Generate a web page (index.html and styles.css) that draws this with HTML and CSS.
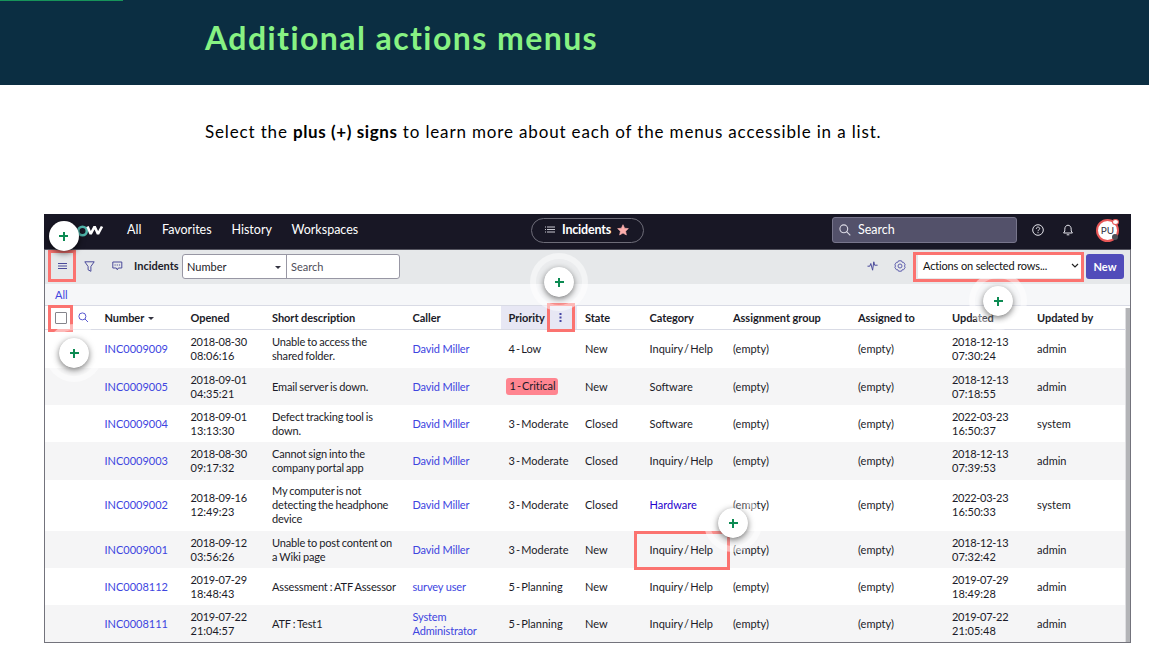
FILE: index.html
```html
<!DOCTYPE html>
<html lang="en">
<head>
<meta charset="utf-8">
<title>Additional actions menus</title>
<link rel="stylesheet" href="styles.css">
</head>
<body>
<header class="banner"><div class="progress"></div><h1>Additional actions menus</h1></header>
<p class="intro">Select the <b>plus (+) signs</b> to learn more about each of the menus accessible in a list.</p>
<main class="frame">
  <nav class="nav">
    <svg class="logo" width="50" height="18" viewBox="0 0 50 18"><circle cx="26.500" cy="10" r="4.300" fill="none" stroke="#4fb5aa" stroke-width="2.600"/><path d="M31.500 5.500l3.200 7.500 3.900-7.500 3.400 7.500 4-7.500" fill="none" stroke="#fff" stroke-width="2.600" stroke-linejoin="bevel"/></svg>
    <div class="links"><span class="l1">All</span><span class="l2">Favorites</span><span class="l3">History</span><span>Workspaces</span></div>
    <div class="pill"><svg width="10" height="8" viewBox="0 0 10 8" stroke="#c9c9d2"><path d="M2 1H10M2 3.500H10M2 6H10M0 1h1M0 3.500h1M0 6h1"/></svg><b>Incidents</b><svg width="12" height="12" viewBox="0 0 12 12"><path fill="#fcaeac" stroke="#fcaeac" stroke-width=".6" stroke-linejoin="round" d="M6 .7l1.600 3.500 3.800.4-2.800 2.600.8 3.800L6 9.100 2.600 11l.8-3.800L.6 4.600l3.800-.4z"/></svg></div>
    <div class="global"><svg width="12" height="12" viewBox="0 0 12 12" fill="none" stroke="#dddce6" stroke-width="1.100"><circle cx="4.800" cy="4.800" r="3.900"/><path d="M7.600 7.600l3.700 3.700"/></svg>Search</div>
    <svg class="help" width="12" height="12" viewBox="0 0 12 12" fill="none" stroke="#e5e5ec"><circle cx="6" cy="6" r="5.300"/><path d="M4.300 4.800c0-2.300 3.400-2.200 3.400-.2C7.700 5.900 6 5.700 6 7.200M6 8.200v1"/></svg>
    <svg class="bell" width="10" height="12" viewBox="0 0 10 12" fill="none" stroke="#e5e5ec"><path d="M1.800 7V5.200c0-5.300 6.400-5.300 6.400 0V7l1.200 2H.6zM3.700 10.800h2.600"/></svg>
    <div class="avatar"><span>PU</span><i class="ring"></i><i class="presence"></i></div>
  </nav>
  <section class="toolbar">
    <svg class="t1" width="10" height="8" viewBox="0 0 10 8" stroke="#4b4b9b"><path d="M1 1.500h9M1 4h9M1 6.500h9"/></svg>
    <svg class="t2" width="11" height="11" viewBox="0 0 11 11" fill="none" stroke="#4b4b9b" stroke-linejoin="round"><path d="M.8.800h9.400L6.900 5.500v4.800L4.100 8.800V5.500z"/></svg>
    <svg class="t3" width="11" height="10" viewBox="0 0 11 10" fill="none" stroke="#4b4b9b"><path d="M.8 1h9v6H6.300L5.300 8.800 4.300 7H.8z"/><path d="M2.500 4h1.200M4.700 4h1.200M6.900 4h1.200"/></svg>
    <b class="title">Incidents</b>
    <div class="combo"><div class="field">Number<i class="caret"></i></div><div class="query">Search</div></div>
    <svg class="pulse" width="11" height="10" viewBox="0 0 11 10" fill="none" stroke="#4b4b9b"><path d="M.5 5.200h2.300l1-2.700 1.800 6.700L6.800.800l.8 3.400h3"/></svg>
    <svg class="gear" width="12" height="12" viewBox="0 0 12 12" fill="none" stroke="#6060ae"><path d="M4.500.800h3l.6 1.400 1.600.2 1.500 2.500L10.400 6l.8 1.200-1.500 2.500-1.600.1-.6 1.400h-3l-.6-1.400-1.600-.1L.8 7.200 1.600 6 .8 4.900l1.500-2.500 1.600-.2z" stroke-linejoin="round"/><circle cx="6" cy="6" r="2"/></svg>
    <div class="actions">Actions on selected rows...<svg width="8" height="6" viewBox="0 0 8 6" fill="none" stroke="#222" stroke-width="1.200"><path d="M1 1l3 3 3-3"/></svg></div>
    <div class="new">New</div>
  </section>
  <div class="crumb">All</div>
  <section class="list">
    <div class="row head"><div class="tools"><i class="check"></i><svg width="11" height="11" viewBox="0 0 11 11" fill="none" stroke="#5a5ad0"><circle cx="4.400" cy="4.400" r="3.500"/><path d="M7 7l3 3"/></svg></div><div>Number<i class="caret"></i></div><div>Opened</div><div>Short description</div><div>Caller</div><div class="priority">Priority<svg width="3" height="9" viewBox="0 0 3 9" fill="#4747a5"><path d="M.5 0h2v2h-2zM.5 3.500h2v2h-2zM.5 7h2v2h-2z"/></svg></div><div>State</div><div>Category</div><div>Assignment group</div><div>Assigned to</div><div>Updated</div><div>Updated by</div></div>
    <div class="row first"><div></div><div class="link">INC0009009</div><div class="date">2018-08-30<br>08:06:16</div><div class="desc">Unable to access the<br>shared folder.</div><div class="link caller">David Miller</div><div class="tight">4 - Low</div><div>New</div><div class="tight">Inquiry / Help</div><div>(empty)</div><div>(empty)</div><div class="date">2018-12-13<br>07:30:24</div><div>admin</div></div>
    <div class="row alt"><div></div><div class="link">INC0009005</div><div class="date">2018-09-01<br>04:35:21</div><div class="desc">Email server is down.</div><div class="link caller">David Miller</div><div class="tight"><span class="critical">1 - Critical</span></div><div>New</div><div>Software</div><div>(empty)</div><div>(empty)</div><div class="date">2018-12-13<br>07:18:55</div><div>admin</div></div>
    <div class="row"><div></div><div class="link">INC0009004</div><div class="date">2018-09-01<br>13:13:30</div><div class="desc">Defect tracking tool is<br>down.</div><div class="link caller">David Miller</div><div class="tight">3 - Moderate</div><div>Closed</div><div>Software</div><div>(empty)</div><div>(empty)</div><div class="date">2022-03-23<br>16:50:37</div><div>system</div></div>
    <div class="row alt first"><div></div><div class="link">INC0009003</div><div class="date">2018-08-30<br>09:17:32</div><div class="desc">Cannot sign into the<br>company portal app</div><div class="link caller">David Miller</div><div class="tight">3 - Moderate</div><div>Closed</div><div class="tight">Inquiry / Help</div><div>(empty)</div><div>(empty)</div><div class="date">2018-12-13<br>07:39:53</div><div>admin</div></div>
    <div class="row tall"><div></div><div class="link">INC0009002</div><div class="date">2018-09-16<br>12:49:23</div><div class="desc">My computer is not<br>detecting the headphone<br>device</div><div class="link caller">David Miller</div><div class="tight">3 - Moderate</div><div>Closed</div><div class="hardware">Hardware</div><div>(empty)</div><div>(empty)</div><div class="date">2022-03-23<br>16:50:33</div><div>system</div></div>
    <div class="row alt"><div></div><div class="link">INC0009001</div><div class="date">2018-09-12<br>03:56:26</div><div class="desc">Unable to post content on<br>a Wiki page</div><div class="link caller">David Miller</div><div class="tight">3 - Moderate</div><div>New</div><div class="tight">Inquiry / Help</div><div>(empty)</div><div>(empty)</div><div class="date">2018-12-13<br>07:32:42</div><div>admin</div></div>
    <div class="row"><div></div><div class="link">INC0008112</div><div class="date">2019-07-29<br>18:48:43</div><div class="desc">Assessment : ATF Assessor</div><div class="link caller">survey user</div><div class="tight">5 - Planning</div><div>New</div><div class="tight">Inquiry / Help</div><div>(empty)</div><div>(empty)</div><div class="date">2019-07-29<br>18:49:28</div><div>admin</div></div>
    <div class="row alt"><div></div><div class="link">INC0008111</div><div class="date">2019-07-22<br>21:04:57</div><div class="desc">ATF : Test1</div><div class="link caller">System<br>Administrator</div><div class="tight">5 - Planning</div><div>New</div><div class="tight">Inquiry / Help</div><div>(empty)</div><div>(empty)</div><div class="date">2019-07-22<br>21:05:48</div><div>admin</div></div>
    <i class="scroll"></i>
  </section>
  <i class="box b1"></i><i class="box b2"></i><i class="box b3"></i><i class="box b4"></i><i class="box b5"></i>
  <i class="plus p1"></i><i class="plus halo p2"></i><i class="plus halo p3"></i><i class="plus halo p4"></i><i class="plus halo p5"></i>
</main>
</body>
</html>
```
FILE: styles.css
```css
* { box-sizing: border-box; }
body { margin: 0; height: 656px; overflow: hidden; background: #fff; font-family: Lato, "Liberation Sans", sans-serif; color: #1b1b28; }
svg { display: block; flex: none; }
.banner { position: relative; height: 85px; background: #0b2e42; padding: 17px 0 0 205px; }
.progress { position: absolute; left: 0; top: 0; width: 123px; height: 1px; background: #17945a; }
h1 { margin: 0; font: bold 32px/42px "Century Gothic", "URW Gothic", Lato, sans-serif; letter-spacing: 1.430px; color: #87f283; white-space: nowrap; }
.intro { margin: 0; height: 129px; padding: 35px 0 0 205px; font: 17px/24px "Century Gothic", "URW Gothic", Lato, sans-serif; letter-spacing: .850px; color: #000; white-space: nowrap; }
.intro b { letter-spacing: .600px; }
.frame { position: relative; margin-left: 44px; width: 1087px; height: 429px; border: 1px solid #73737c; border-top: 0; font-size: 11px; line-height: 14px; }
.nav { display: flex; align-items: center; height: 36px; margin: 0 -1px; background: #181725; border-bottom: 1px solid #555560; color: #fff; font-size: 12.5px; padding: 0 11px 3px 12px; }
.links { display: flex; width: 404px; margin-left: 21px; }
.l1 { width: 35px; } .l2 { width: 69.500px; } .l3 { width: 60px; }
.pill { display: flex; align-items: center; width: 113px; height: 25px; border: 1px solid #6d6c78; border-radius: 13px; padding-left: 13px; gap: 6px; font-size: 12.5px; }
.pill b { margin-left: 1px; letter-spacing: -.2px; }
.global { display: flex; align-items: center; gap: 7px; width: 185px; height: 26px; margin-left: 188px; background: #53516a; border: 1px solid #77758b; border-radius: 3px; padding-left: 6px; }
.help { margin-left: 14.500px; } .bell { margin-left: 19px; }
.avatar { position: relative; width: 23px; height: 23px; margin-left: 23.500px; border: 2px solid #e85757; border-radius: 50%; background: #fff; color: #333244; font-size: 10px; line-height: 19px; text-align: center; }
.ring { position: absolute; right: -2px; top: -2px; width: 7px; height: 6px; border: 1px solid #e85757; border-radius: 50%; background: #fff; }
.presence { position: absolute; right: -1px; bottom: 0; width: 6px; height: 6px; border-radius: 50%; background: #4e4e57; }
.toolbar { display: flex; align-items: center; height: 34px; background: #e6e8ea; padding: 0 5px 2px 12px; }
.t2 { margin-left: 17px; } .t3 { margin-left: 17px; }
.title { width: 48px; margin-left: 11px; }
.combo { display: flex; width: 218px; height: 25px; border: 1px solid #9897a4; border-radius: 3px; background: #fff; line-height: 23px; }
.field { position: relative; width: 104px; padding-left: 4px; border-right: 1px solid #9897a4; }
.query { padding-left: 4px; color: #4d4d59; }
.caret { border: 3px solid transparent; border-top-color: #333340; border-bottom: 0; }
.field .caret { position: absolute; right: 5px; top: 11px; border-width: 3px; border-bottom: 0; }
.pulse { margin-left: 467px; } .gear { margin-left: 16px; }
.actions { display: flex; align-items: center; justify-content: space-between; width: 165px; height: 24px; margin-left: 12px; padding: 0 4px 0 5px; background: #fff; color: #111; letter-spacing: -.15px; }
.new { width: 38px; height: 25px; margin-left: 3px; border-radius: 3px; background: #514cba; color: #fff; font-weight: bold; line-height: 25px; text-align: center; }
.crumb { height: 21px; background: #f6f7f9; padding: 4px 0 0 10px; color: #3e45df; }
.list { position: relative; background: #fff; }
.row { display: grid; grid-template-columns: 59.500px 86px 81.500px 140.500px 96px 76.500px 64.500px 83.500px 125px 94px 85px 88px; align-items: center; height: 37px; color: #1b1b28; white-space: nowrap; }
.row.first { height: 38px; } .row.tall { height: 51px; padding-bottom: 1px; }
.alt { background: #f5f5f6; }
.head { height: 25px; border-top: 1px solid #d9dbe5; border-bottom: 1px solid #d9dbe5; font-weight: bold; letter-spacing: -.05px; }
.head .caret { display: inline-block; margin-left: 4px; vertical-align: 2px; border-width: 3px; border-bottom: 0; }
.tools { display: flex; align-items: center; gap: 11px; padding-left: 10px; }
.check { width: 12px; height: 12px; border: 1px solid #85858c; border-radius: 1px; background: #fff; }
.priority { display: flex; align-items: center; gap: 14px; align-self: stretch; margin: 0 8px 0 -7.500px; padding-left: 7.500px; background: #e7e7f4; }
.link { color: #3e45df; }
.caller { letter-spacing: -.15px; }
.desc { letter-spacing: -.15px; word-spacing: -.6px; }
.tight { word-spacing: -1.700px; }
.date::first-line { letter-spacing: -.3px; }
.hardware { color: #2500ce; }
.critical { display: inline-block; margin-left: -3px; padding: 1px 3px 2px 4px; border-radius: 3px; background: #ff8590; letter-spacing: -.05px; }
.scroll { position: absolute; right: 0; top: 3px; bottom: 0; width: 5px; border-left: 1px solid #dedee1; background: #b3b4b7; }
.box { position: absolute; border: 3px solid #fb7370; }
.b1 { left: 3px; top: 36px; width: 28px; height: 32px; }
.b2 { left: 3px; top: 91px; width: 25px; height: 27px; }
.b3 { left: 501.500px; top: 89px; width: 28px; height: 29px; }
.b4 { left: 868px; top: 38px; width: 171px; height: 30px; }
.b5 { left: 589px; top: 317px; width: 96px; height: 39px; }
.plus { position: absolute; width: 30px; height: 30px; border-radius: 50%; background: linear-gradient(#0d8b53, #0d8b53) center / 9px 2px no-repeat, linear-gradient(#0d8b53, #0d8b53) center / 2px 9px no-repeat, #fff; box-shadow: 0 2px 6px rgba(0,0,0,.65); }
.halo::before { content: ""; position: absolute; inset: -14px; border: 6px solid rgba(255,255,255,.5); border-radius: 50%; background: radial-gradient(circle, transparent 15px, rgba(255,255,255,.2) 15.500px) padding-box; }
.p1 { left: 3.500px; top: 7px; } .p2 { left: 14px; top: 124px; } .p3 { left: 499px; top: 53px; } .p4 { left: 938px; top: 72px; } .p5 { left: 673px; top: 294px; }
```
